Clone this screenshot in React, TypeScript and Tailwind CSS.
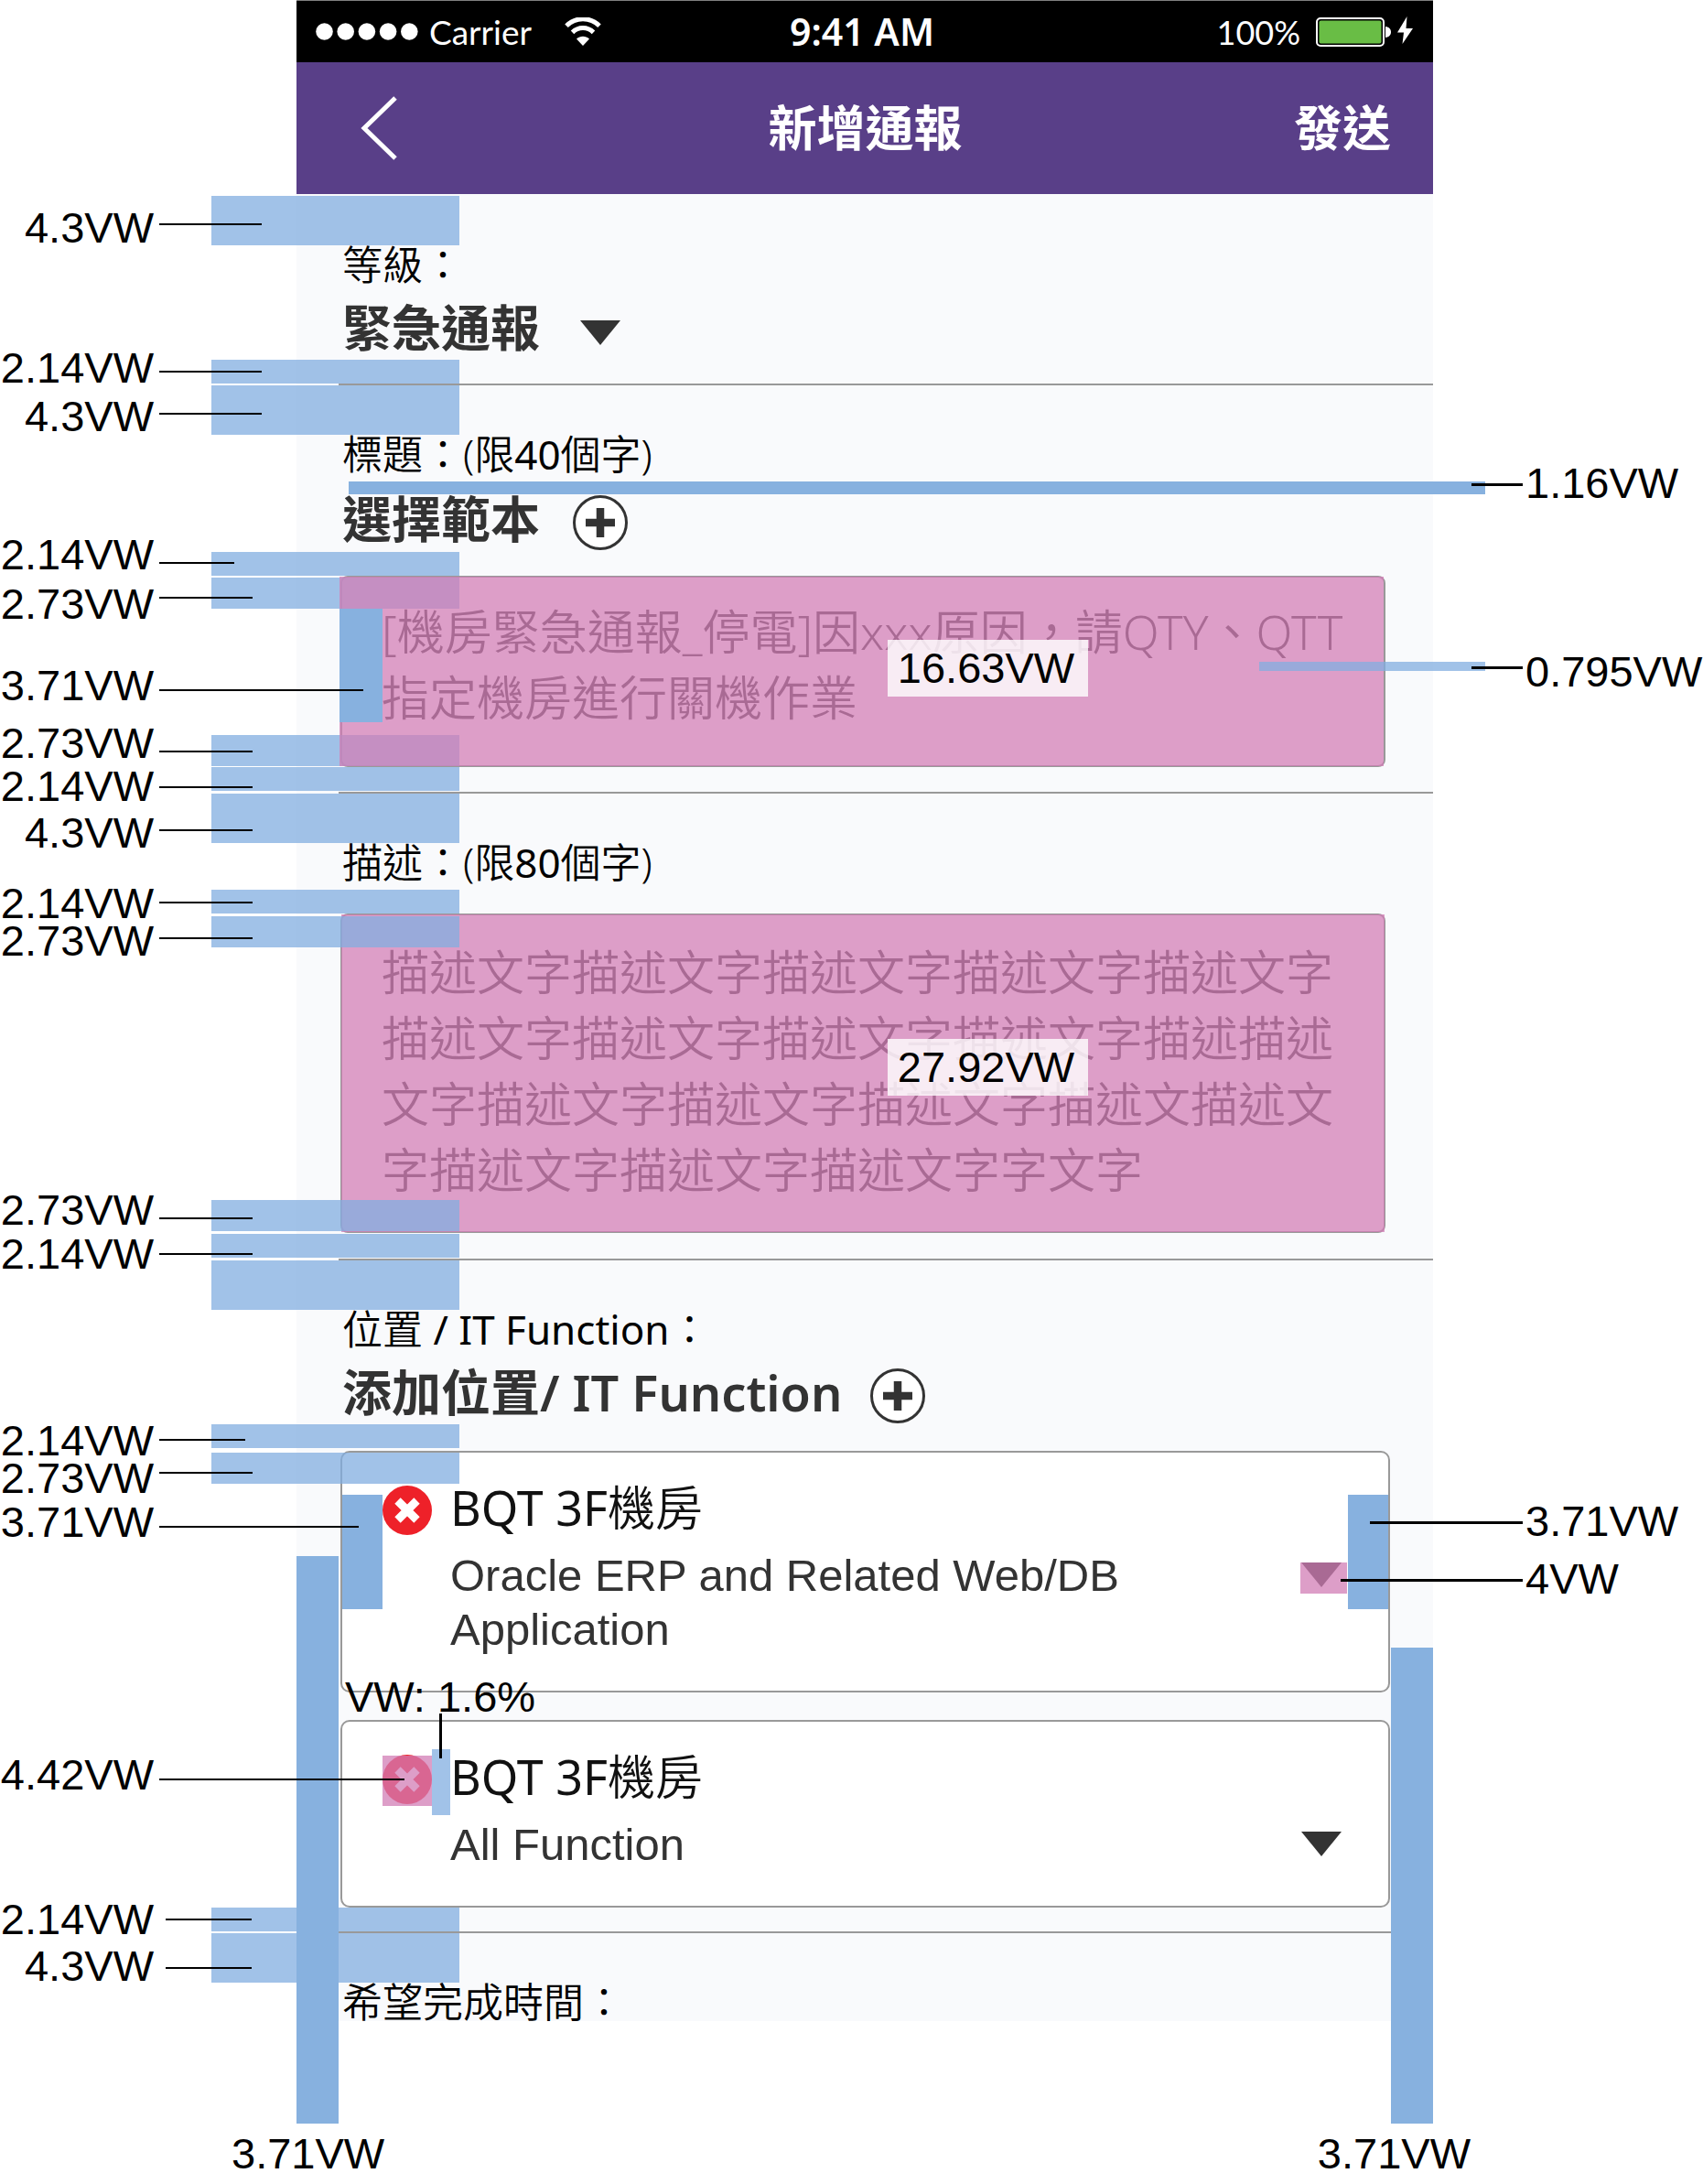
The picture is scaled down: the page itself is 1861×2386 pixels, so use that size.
import React from "react";

type NoteProps = { label: string; text: string; line: string };

/* Dimension callout in the left gutter: a value and its leader line. */
function Note({ label, text, line }: NoteProps) {
  return (
    <>
      <span className={`absolute right-full z-20 mr-[156px] whitespace-nowrap text-[47px] leading-[34px] ${text}`}>{label}</span>
      <span className={`absolute z-20 h-[2px] bg-black ${line}`} />
    </>
  );
}

function RightNote({ label, text, line }: NoteProps) {
  return (
    <>
      <span className={`absolute left-full z-20 ml-[101px] whitespace-nowrap text-[47px] leading-[34px] ${text}`}>{label}</span>
      <span className={`absolute -right-[98px] z-20 h-[3px] bg-black ${line}`} />
    </>
  );
}

/* Vertical spacing of the form, tinted so that its size can be read. */
function Space({ size, note }: { size: string; note?: NoteProps }) {
  return (
    <div className={`relative ${size}`}>
      <div className="pointer-events-none absolute inset-y-0 -left-[93px] w-[271px] bg-[#81ade0]/75" />
      {note && <Note {...note} />}
    </div>
  );
}

function InnerSpace({ place }: { place: string }) {
  return <div className={`pointer-events-none absolute -left-[93px] h-[34px] w-[271px] bg-[#81ade0]/75 ${place}`} />;
}

function Divider() {
  return <hr className="ml-[46px] border-t-2 border-[#999]" />;
}

/* Latin runs are set one weight heavier than the Chinese text around them. */
function Latin({ children }: { children: string }) {
  return <span className="font-normal">{children}</span>;
}

function Triangle() {
  return (
    <svg viewBox="0 0 44 27" className="h-[27px] w-[44px]" aria-hidden="true">
      <path d="M0 0H44L22 27Z" fill="#333" />
    </svg>
  );
}

function AddButton({ label }: { label: string }) {
  return (
    <button type="button" aria-label={label} className="mt-1 size-[60px] shrink-0">
      <svg viewBox="0 0 60 60" className="size-full">
        <circle cx="30" cy="30" r="28.5" fill="#fff" stroke="#333" strokeWidth="3" />
        <path d="M30 14V46M14 30H46" stroke="#333" strokeWidth="8.5" />
      </svg>
    </button>
  );
}

function RemoveButton() {
  return (
    <button type="button" aria-label="移除" className="mt-[3px] size-[54px] shrink-0">
      <svg viewBox="0 0 54 54" className="size-full">
        <circle cx="27" cy="27" r="27" fill="#ee2129" />
        <path d="M16.5 16.5L37.5 37.5M37.5 16.5L16.5 37.5" stroke="#fff" strokeWidth="9" />
      </svg>
    </button>
  );
}

function LocationCard({ code, room, detail, children }: { code: string; room: string; detail: string; children?: React.ReactNode }) {
  return (
    <div className="relative pr-[47px] pl-12">
      <article className="flex gap-5 rounded-[10px] border-2 border-[#999] bg-white pt-[33px] pr-[51px] pb-[37px] pl-[44px]">
        <RemoveButton />
        <div className="min-w-0 flex-1">
          <h3 className="text-[52px] leading-[54px] font-[350] text-[#111]">
            <Latin>{code}</Latin>
            {room}
          </h3>
          <div className="mt-[18px] flex items-start justify-between gap-4">
            <p className="font-['Liberation_Sans',sans-serif] text-[49px] leading-[59px] text-[#333]">{detail}</p>
            <button type="button" aria-label="展開" className="mt-[15px] flex shrink-0">
              <Triangle />
            </button>
          </div>
        </div>
      </article>
      {children}
    </div>
  );
}

function Chip({ children, place }: { children: string; place: string }) {
  return (
    <div className={`absolute z-10 flex h-[62px] w-[219px] items-center justify-center bg-white/80 pr-1 text-[47px] leading-[34px] ${place}`}>
      {children}
    </div>
  );
}

function StatusBar() {
  return (
    <div className="flex h-[68px] items-center justify-between border-t border-[#808080] bg-black pr-[21px] pl-[21px] text-white">
      <div className="flex flex-1 items-center">
        <svg viewBox="0 0 112 19" className="h-[19px] w-[112px]" aria-hidden="true">
          {[0, 1, 2, 3, 4].map((i) => (
            <circle key={i} cx={9.5 + i * 23.2} cy="9.5" r="9.3" fill="#fff" />
          ))}
        </svg>
        <span className="ml-3 font-[Lato,sans-serif] text-[37px]">Carrier</span>
        <svg viewBox="0 0 40 31" className="ml-9 h-[31px] w-[40px]" aria-hidden="true">
          <path d="M2 9.2C12-.8 28-.8 38 9.2" fill="none" stroke="#fff" strokeWidth="5" />
          <path d="M8.5 16.4C15 10 25 10 31.5 16.4" fill="none" stroke="#fff" strokeWidth="5" />
          <path d="M13 23.5C17 19.8 23 19.8 27 23.5L20 31Z" fill="#fff" />
        </svg>
      </div>
      <span className="pr-1.5 text-[41px] font-semibold">9:41 AM</span>
      <div className="flex flex-1 items-center justify-end">
        <span className="font-[Lato,sans-serif] text-[36px]">100%</span>
        <svg viewBox="0 0 107 34" className="ml-[17px] h-[34px] w-[107px]" aria-hidden="true">
          <rect x="1" y="2" width="73" height="30" rx="4" fill="none" stroke="#fff" strokeWidth="2" />
          <rect x="3.5" y="4.5" width="68" height="25" rx="2" fill="#69bd45" />
          <path d="M76 11C80 11.5 82 14 82 17S80 22.5 76 23Z" fill="#fff" />
          <path d="M99.5 0L89 17.5H96L94.5 30L106 13H98.5Z" fill="#fff" />
        </svg>
      </div>
    </div>
  );
}

const label = "block pl-[50px] text-[44px] leading-[42px] font-[350] text-black";
const heading = "text-[54px] leading-[60px] font-bold text-[#333]";
const area = "block w-full resize-none overflow-hidden rounded-lg border-2 border-[#999] bg-white pl-[43px] text-[52px] leading-[72px] font-[350] text-[#333]";

export default function App() {
  return (
    <div className="overflow-x-hidden bg-white font-['Liberation_Sans',sans-serif] text-black" lang="zh-Hant">
      <div className="mr-[295px] ml-[324px]">
        <main className="bg-[#f9fafc] font-['Noto_Sans','Noto_Sans_CJK_TC',sans-serif]">
          <StatusBar />
          <header className="flex h-[144px] items-center bg-[#593f88] pr-[46px] pl-[70px] text-[53px] leading-[60px] font-bold text-white">
            <div className="flex flex-1">
              <button type="button" aria-label="返回">
                <svg viewBox="0 0 40 70" className="h-[70px] w-[40px]">
                  <path d="M38 2L4 35L38 68" fill="none" stroke="#fff" strokeWidth="5" />
                </svg>
              </button>
            </div>
            <h1 className="-ml-[23px]">新增通報</h1>
            <div className="flex flex-1 justify-end">
              <button type="button">發送</button>
            </div>
          </header>

          <div className="font-['Liberation_Sans',sans-serif]">
            <div className="pt-[2px]">
              <Space size="h-[54px]" note={{ label: "4.3VW", text: "top-[18px]", line: "-left-[150px] top-[30px] w-[112px]" }} />
            </div>
            <section className="pb-px font-['Noto_Sans','Noto_Sans_CJK_TC',sans-serif]">
              <label htmlFor="level" className={label}>等級：</label>
              <div className="mt-[18px] flex h-16 pl-[50px]">
                <div className="relative">
                  <select id="level" className={`w-[304px] appearance-none bg-transparent ${heading}`}>
                    <option>緊急通報</option>
                  </select>
                  <div className="pointer-events-none absolute top-[22px] right-0">
                    <Triangle />
                  </div>
                </div>
              </div>
            </section>
            <Space size="h-[26px]" note={{ label: "2.14VW", text: "-top-2", line: "-left-[150px] top-[12px] w-[112px]" }} />
            <Divider />
            <Space size="h-[54px]" note={{ label: "4.3VW", text: "top-[17px]", line: "-left-[150px] top-[30px] w-[112px]" }} />

            <section className="relative pb-[2px]">
              <div className="font-['Noto_Sans','Noto_Sans_CJK_TC',sans-serif]">
                <label htmlFor="title" className={label}>
                  標題：(限<Latin>40</Latin>個字)
                </label>
                <div className="mt-5 flex h-16 gap-9 pl-[50px]">
                  <span className={heading}>選擇範本</span>
                  <AddButton label="選擇範本" />
                </div>
              </div>
              <div className="pointer-events-none absolute top-[51px] -right-[57px] left-[57px] h-[14px] bg-[#87b1df]" />
              <RightNote label="1.16VW" text="top-[36px]" line="top-[53px] w-[56px]" />
            </section>
            <Space size="h-[26px]" note={{ label: "2.14VW", text: "-top-[14px]", line: "-left-[150px] top-[11px] w-[82px]" }} />
            <div className="relative pr-[52px] pl-12">
              <textarea
                id="title"
                className={`h-[209px] pt-[23px] font-['Noto_Sans','Noto_Sans_CJK_TC',sans-serif] whitespace-pre ${area}`}
                defaultValue={"[機房緊急通報_停電]因xxx原因，請QTY、QTT\n指定機房進行關機作業"}
              />
              <InnerSpace place="top-[2px]" />
              <InnerSpace place="top-[174px]" />
              <div className="pointer-events-none absolute inset-y-px right-[54px] left-[47px] bg-[#d27db5]/75" />
              <div className="pointer-events-none absolute top-[36px] left-[47px] h-[124px] w-[47px] bg-[#87b1df]" />
              <div className="pointer-events-none absolute top-[94px] -right-[57px] h-[10px] w-[247px] bg-[#81ade0]/75" />
              <Chip place="top-[70px] right-[377px]">16.63VW</Chip>
              <Note label="2.73VW" text="top-[14px]" line="-left-[150px] top-[23px] w-[102px]" />
              <Note label="3.71VW" text="top-[103px]" line="-left-[150px] top-[124px] w-[223px]" />
              <Note label="2.73VW" text="top-[166px]" line="-left-[150px] top-[191px] w-[102px]" />
              <RightNote label="0.795VW" text="top-[88px]" line="top-[99px] w-[56px]" />
            </div>
            <Space size="h-[26px]" note={{ label: "2.14VW", text: "top-1", line: "-left-[150px] top-[21px] w-[102px]" }} />
            <div className="pt-px">
              <Divider />
            </div>
            <Space size="h-[54px]" note={{ label: "4.3VW", text: "top-[26px]", line: "-left-[150px] top-[39px] w-[102px]" }} />

            <section className="pb-[9px] font-['Noto_Sans','Noto_Sans_CJK_TC',sans-serif]">
              <label htmlFor="description" className={label}>
                描述：(限<Latin>80</Latin>個字)
              </label>
            </section>
            <Space size="h-[26px]" note={{ label: "2.14VW", text: "-top-[2px]", line: "-left-[150px] top-[13px] w-[102px]" }} />
            <div className="relative pr-[52px] pl-12">
              <textarea
                id="description"
                className={`h-[349px] pt-[26px] pr-[44px] font-['Noto_Sans','Noto_Sans_CJK_TC',sans-serif] ${area}`}
                defaultValue="描述文字描述文字描述文字描述文字描述文字描述文字描述文字描述文字描述文字描述描述文字描述文字描述文字描述文字描述文描述文字描述文字描述文字描述文字字文字"
              />
              <div className="pointer-events-none absolute inset-y-px right-[53px] left-[49px] bg-[#d27db5]/75" />
              <InnerSpace place="top-[3px]" />
              <InnerSpace place="top-[313px]" />
              <Chip place="top-[137px] right-[377px]">27.92VW</Chip>
              <Note label="2.73VW" text="top-[13px]" line="-left-[150px] top-[26px] w-[102px]" />
              <Note label="2.73VW" text="top-[307px]" line="-left-[150px] top-[332px] w-[102px]" />
            </div>
            <div className="pt-px">
              <Space size="h-[26px]" note={{ label: "2.14VW", text: "top-[5px]", line: "-left-[150px] top-[21px] w-[102px]" }} />
            </div>
            <div className="pt-px">
              <Divider />
            </div>
            <Space size="h-[54px]" />

            <section className="pb-px font-['Noto_Sans','Noto_Sans_CJK_TC',sans-serif]">
              <h2 className={label}>
                位置<Latin> / IT Function</Latin>：
              </h2>
              <div className="mt-[18px] flex h-16 gap-[31px] pl-[50px]">
                <span className={`${heading} font-semibold`}>添加位置/ IT Function</span>
                <AddButton label="添加位置" />
              </div>
            </section>
            <Space size="h-[26px]" note={{ label: "2.14VW", text: "top-px", line: "-left-[150px] top-[16px] w-[94px]" }} />

            <div className="flex flex-col gap-[30px] pt-[3px]">
              <div className="font-['Noto_Sans','Noto_Sans_CJK_TC',sans-serif]">
                <LocationCard code="BQT 3F" room="機房" detail="Oracle ERP and Related Web/DB Application">
                  <div className="font-['Liberation_Sans',sans-serif]">
                    <InnerSpace place="top-[2px]" />
                    <div className="pointer-events-none absolute top-[48px] left-[50px] h-[125px] w-[44px] bg-[#87b1df]" />
                    <div className="pointer-events-none absolute top-[48px] right-[49px] h-[125px] w-[44px] bg-[#87b1df]" />
                    <div className="pointer-events-none absolute top-[122px] right-[94px] h-[34px] w-[51px] bg-[#d27db5]/75" />
                    <Note label="2.73VW" text="top-[13px]" line="-left-[150px] top-[23px] w-[102px]" />
                    <Note label="3.71VW" text="top-[61px]" line="-left-[150px] top-[82px] w-[218px]" />
                    <RightNote label="3.71VW" text="top-[60px]" line="top-[77px] w-[167px]" />
                    <RightNote label="4VW" text="top-[123px]" line="top-[140px] w-[199px]" />
                  </div>
                </LocationCard>
              </div>
              <div className="font-['Noto_Sans','Noto_Sans_CJK_TC',sans-serif]">
                <LocationCard code="BQT 3F" room="機房" detail="All Function">
                  <div className="font-['Liberation_Sans',sans-serif]">
                    <div className="pointer-events-none absolute top-[39px] left-[94px] h-[55px] w-[54px] bg-[#d27db5]/75" />
                    <div className="pointer-events-none absolute top-[32px] left-[148px] h-[72px] w-[20px] bg-[#81ade0]/75" />
                    <span className="absolute -top-[42px] left-[53px] z-20 text-[47px] leading-[34px]">VW: 1.6%</span>
                    <span className="absolute -top-[7px] left-[156px] z-20 h-[49px] w-[3px] bg-black" />
                    <Note label="4.42VW" text="top-[43px]" line="-left-[150px] top-[64px] w-[268px]" />
                  </div>
                </LocationCard>
              </div>
            </div>
            <Space size="h-[26px]" note={{ label: "2.14VW", text: "-top-1", line: "-left-[143px] top-[12px] w-[94px]" }} />
            <Divider />
            <Space size="h-[54px]" note={{ label: "4.3VW", text: "top-[19px]", line: "-left-[143px] top-[37px] w-[94px]" }} />

            <section className="relative font-['Noto_Sans','Noto_Sans_CJK_TC',sans-serif]">
              <h2 className={label}>希望完成時間：</h2>
              <div className="pointer-events-none absolute -bottom-[112px] left-0 z-10 h-[620px] w-[46px] bg-[#87b1df]" />
              <div className="pointer-events-none absolute right-0 -bottom-[112px] z-10 h-[520px] w-[46px] bg-[#87b1df]" />
            </section>
          </div>
        </main>
        <div className="mt-[121px] -mr-[41px] -ml-[71px] flex justify-between pb-[9px] text-[47px] leading-[48px]">
          <span>3.71VW</span>
          <span>3.71VW</span>
        </div>
      </div>
    </div>
  );
}
